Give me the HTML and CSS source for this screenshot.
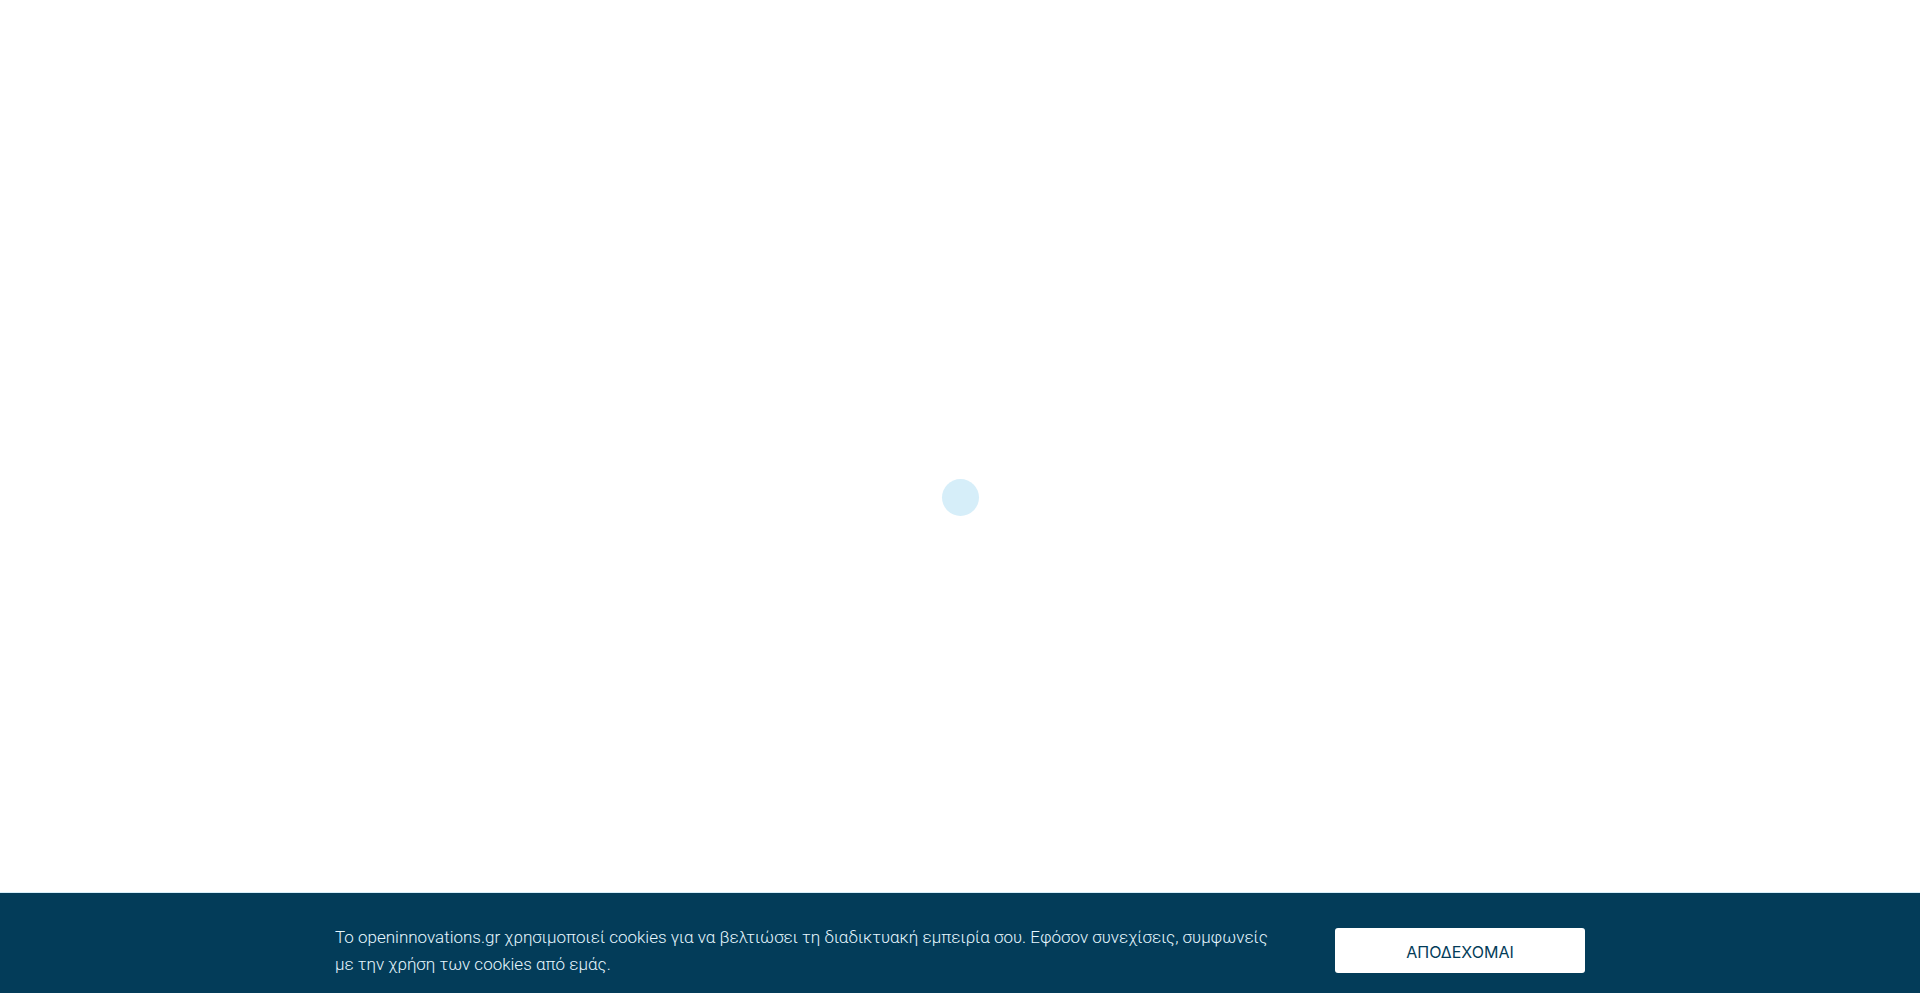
FILE: index.html
```html
<!DOCTYPE html>
<html lang="el">
<head>
<meta charset="utf-8">
<meta name="viewport" content="width=device-width, initial-scale=1">
<title>Open Innovations</title>
<link rel="stylesheet" href="styles.css">
</head>
<body>
<main class="preloader">
  <div class="preloader-dot" role="status" aria-label="Φόρτωση"></div>
</main>
<section class="cookie-bar" aria-label="Cookies">
  <div class="cookie-inner">
    <p class="cookie-text">Το openinnovations.gr χρησιμοποιεί cookies για να βελτιώσει τη διαδικτυακή εμπειρία σου. Εφόσον συνεχίσεις, συμφωνείς με την χρήση των cookies από εμάς.</p>
    <button class="cookie-accept" type="button">ΑΠΟΔΕΧΟΜΑΙ</button>
  </div>
</section>
</body>
</html>
```
FILE: styles.css
```css
* {
  box-sizing: border-box;
}

body {
  margin: 0;
  background: #fff;
  font-family: Roboto, "Noto Sans", sans-serif;
}

.preloader {
  display: flex;
  align-items: center;
  justify-content: center;
  min-height: 100vh;
  padding-top: 1px;
}

.preloader-dot {
  width: 37px;
  height: 37px;
  border-radius: 50%;
  background: #d6eef9;
}

.cookie-bar {
  position: fixed;
  left: 0;
  right: 0;
  bottom: 0;
  padding: 31px 20px 15px;
  border-top: 1px solid #d6eef9;
  background: #033c59;
  background-clip: padding-box;
}

.cookie-inner {
  display: flex;
  align-items: flex-start;
  justify-content: space-between;
  gap: 48px;
  max-width: 1250px;
  margin: 0 auto;
}

.cookie-text {
  flex: 1;
  margin: 0;
  color: #e6f7ff;
  font-size: 17px;
  font-weight: 300;
  line-height: 27px;
}

.cookie-accept {
  width: 250px;
  height: 45px;
  margin-top: 4px;
  padding: 2px 0 0;
  border: 0;
  border-radius: 3px;
  background: #fff;
  color: #033c59;
  font-family: Inter, "Noto Sans", sans-serif;
  font-size: 16px;
  font-weight: 400;
}
```
